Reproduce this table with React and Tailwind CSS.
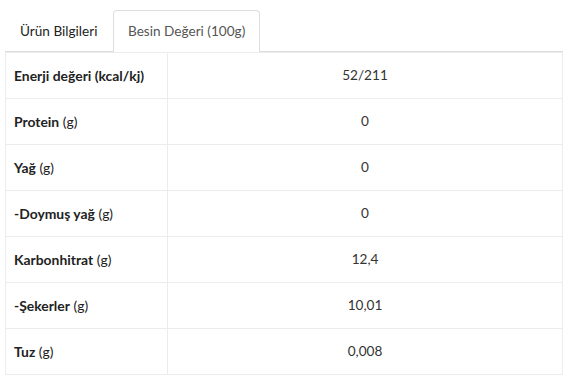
import React from "react";

const rows = [
  ["Enerji değeri (kcal/kj)", "", "52/211"],
  ["Protein", "(g)", "0"],
  ["Yağ", "(g)", "0"],
  ["-Doymuş yağ", "(g)", "0"],
  ["Karbonhitrat", "(g)", "12,4"],
  ["-Şekerler", "(g)", "10,01"],
  ["Tuz", "(g)", "0,008"],
];

export default function App() {
  return (
    <div className="w-[569px] h-[378px] bg-white pt-[10px] px-[5px] text-[13.6px] text-[#222]" style={{ fontFamily: "Lato, 'Open Sans', sans-serif" }}>
      <div className="w-[558px]">
        <div className="flex border-b border-[#dddddd] h-[42px]">
          <div className="pl-[15px] pr-[14px] py-[11px] leading-[20px] w-[108px] whitespace-nowrap text-[#222]">Ürün Bilgileri</div>
          <div className="px-[14px] py-[10px] leading-[20px] border border-[#dddddd] border-b-0 rounded-t-[4px] bg-white text-[#555] mb-[-1px] h-[42px] whitespace-nowrap">Besin Değeri (100g)</div>
        </div>
        <div className="border-l border-r border-t border-[#ececec]">
          {rows.map(([label, unit, value]) => (
            <div key={label} className="grid grid-cols-[162px_1fr] border-b border-[#ececec]">
              <div className="border-r border-[#ececec] pl-[8px] py-[12px] leading-[21px] text-[13.9px] font-bold whitespace-nowrap">
                {label}
                {unit && <span className="font-normal"> {unit}</span>}
              </div>
              <div className="py-[12px] leading-[21px] text-center text-[#333]">{value}</div>
            </div>
          ))}
        </div>
      </div>
    </div>
  );
}
